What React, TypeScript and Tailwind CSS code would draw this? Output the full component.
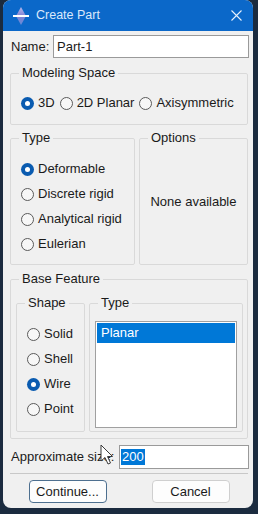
const font = { fontFamily: '"Liberation Sans", Arial, sans-serif' };

function Radio({ label, checked = false }: { label: string; checked?: boolean }) {
  return (
    <label className="flex items-center gap-[4px] h-[16px] text-[13px] text-[#1a1a1a] leading-[16px]">
      {checked ? (
        <span className="w-[13px] h-[13px] rounded-full bg-[#0a5bb0] flex items-center justify-center shrink-0">
          <span className="w-[5px] h-[5px] rounded-full bg-white" />
        </span>
      ) : (
        <span className="w-[13px] h-[13px] rounded-full border border-[#5a5a5a] bg-[#f7f7f7] shrink-0" />
      )}
      <span>{label}</span>
    </label>
  );
}

function Group({
  title,
  className,
  children,
}: {
  title: string;
  className?: string;
  children: React.ReactNode;
}) {
  return (
    <fieldset className="border border-[#d9d9d9] rounded-[2px] min-w-0 flex flex-col">
      <legend className="ml-[8px] px-[3px] text-[13px] leading-[16px] text-[#1a1a1a]">{title}</legend>
      <div className={"flex-1 " + (className ?? "")}>{children}</div>
    </fieldset>
  );
}

export default function App() {
  return (
    <div className="w-[258px] h-[514px] bg-[#1b2b3f] pl-[3px] pr-[5px] pb-[6px]" style={font}>
      <div className="relative h-full flex flex-col rounded-[8px] overflow-hidden bg-[#f0f0f0]">
        {/* Title bar */}
        <div className="h-[31px] bg-[#0b68c9] flex items-center pl-[10px] pr-[10px] shrink-0">
          <svg width="16" height="18" viewBox="0 0 16 18">
            <defs>
              <linearGradient id="dia" x1="0" y1="0" x2="0" y2="1">
                <stop offset="0" stopColor="#c9c2ef" />
                <stop offset="0.5" stopColor="#8f84d4" />
                <stop offset="1" stopColor="#6f8fd8" />
              </linearGradient>
            </defs>
            <path d="M8 0 L13 9 L8 18 L3 9 Z" fill="url(#dia)" opacity="0.9" />
            <rect x="0" y="8" width="16" height="2" fill="#ffffff" />
          </svg>
          <span className="ml-[7px] text-[12.5px] text-[#dbe9fb]">Create Part</span>
          <svg className="ml-auto mr-[1px]" width="11" height="11" viewBox="0 0 11 11">
            <path d="M0.5 0.5 L10.5 10.5 M10.5 0.5 L0.5 10.5" stroke="#e6f0fc" strokeWidth="1.1" />
          </svg>
        </div>

        {/* Body */}
        <div className="flex flex-col pl-[7px] pr-[5px] pt-[4px]">
          <div className="flex items-center h-[23px]">
            <span className="ml-[1px] text-[13px] text-[#1a1a1a] w-[42px]">Name:</span>
            <div className="flex-1 h-[23px] bg-white border border-[#9a9a9a] flex items-center px-[3px] text-[13px] text-[#1a1a1a] -mr-[1px]">
              Part-1
            </div>
          </div>

          <div className="mt-[7px]">
            <Group title="Modeling Space" className="pt-[14px] pb-[13px] pl-[10px]">
              <div className="flex items-center gap-[5px]">
                <Radio label="3D" checked />
                <Radio label="2D Planar" />
                <Radio label="Axisymmetric" />
              </div>
            </Group>
          </div>

          <div className="mt-[5px] grid grid-cols-[125px_1fr] gap-[4px]">
            <Group title="Type" className="pt-[15px] pb-[12px] pl-[10px]">
              <div className="flex flex-col gap-[9px]">
                <Radio label="Deformable" checked />
                <Radio label="Discrete rigid" />
                <Radio label="Analytical rigid" />
                <Radio label="Eulerian" />
              </div>
            </Group>
            <Group title="Options" className="flex items-center justify-center pb-[6px]">
              <span className="text-[13px] text-[#1a1a1a]">None available</span>
            </Group>
          </div>

          <div className="mt-[6px]">
            <Group title="Base Feature" className="pt-[8px] pb-[6px] pl-[5px] pr-[4px]">
              <div className="grid grid-cols-[69px_1fr] gap-[4px]">
                <Group title="Shape" className="pt-[15px] pb-[13px] pl-[10px]">
                  <div className="flex flex-col gap-[9px]">
                    <Radio label="Solid" />
                    <Radio label="Shell" />
                    <Radio label="Wire" checked />
                    <Radio label="Point" />
                  </div>
                </Group>
                <Group title="Type" className="pt-[10px] pb-[3px] px-[5px]">
                  <div className="h-[107px] bg-white border border-[#a0a0a0] p-[1px]">
                    <div className="h-[20px] bg-[#0078d7] text-white text-[13px] leading-[20px] pl-[4px]">
                      Planar
                    </div>
                  </div>
                </Group>
              </div>
            </Group>
          </div>

          <div className="mt-[6px] flex items-center h-[24px]">
            <span className="ml-[1px] w-[108px] text-[13px] text-[#1a1a1a]">Approximate size:</span>
            <div className="flex-1 h-[24px] bg-white border border-[#9a9a9a] flex items-center px-[1px] -mr-[1px]">
              <span className="bg-[#0078d7] text-white text-[13px] leading-[16px] px-[1px]">200</span>
            </div>
          </div>

          <div className="mt-[4px] border-t border-[#c8c8c8]" />

          <div className="mt-[6px] flex justify-center gap-[45px]">
            <button className="w-[78px] h-[23px] rounded-[4px] border border-[#4d6f8f] bg-[#fdfdfd] text-[13px] text-[#1a1a1a]">
              Continue...
            </button>
            <button className="w-[78px] h-[23px] rounded-[4px] border border-[#cfcfcf] bg-[#fdfdfd] text-[13px] text-[#1a1a1a]">
              Cancel
            </button>
          </div>
        </div>

        {/* Mouse pointer */}
        <svg className="absolute left-[97px] top-[444px]" width="14" height="22" viewBox="0 0 14 22">
          <path
            d="M1 1 L1 17 L5 13.5 L8 20 L10.5 19 L7.5 12.5 L12.5 12.5 Z"
            fill="#ffffff"
            stroke="#3a3a3a"
            strokeWidth="1"
            strokeLinejoin="round"
          />
        </svg>
      </div>
    </div>
  );
}
